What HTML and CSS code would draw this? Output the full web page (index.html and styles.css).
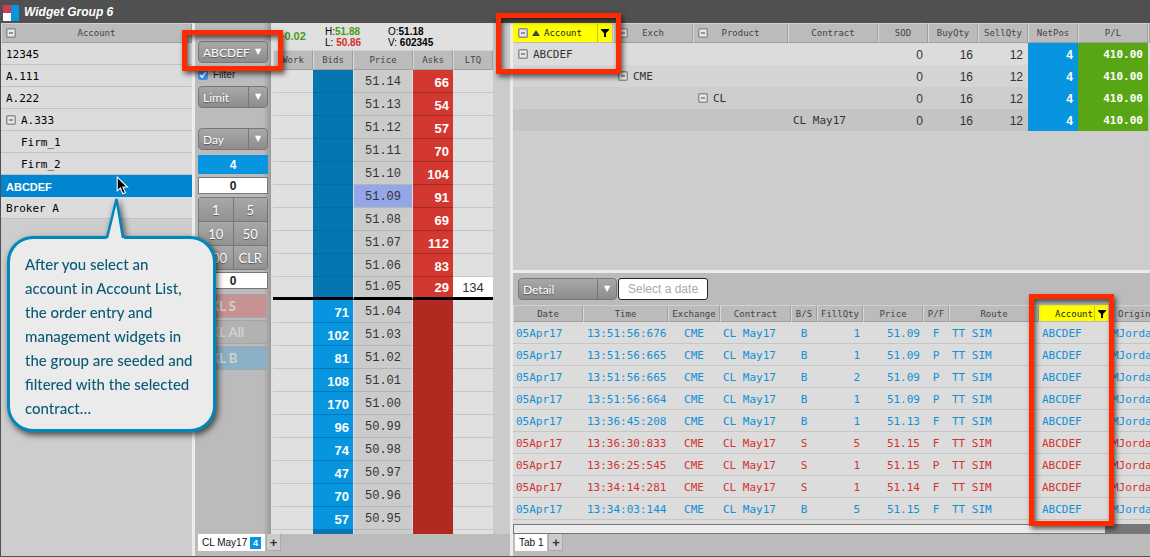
FILE: index.html
```html
<!DOCTYPE html>
<html lang="en">
<head>
<meta charset="utf-8">
<title>Widget Group 6</title>
<link rel="stylesheet" href="styles.css">
</head>
<body>
<svg class="defs" aria-hidden="true">
  <symbol id="minus" viewBox="0 0 10 10"><rect x=".75" y=".75" width="8.5" height="8.5" rx="1" fill="#e8e8e8" stroke="#8f8f8f" stroke-width="1.5"/><path d="M3 5h4" stroke="#777" stroke-width="1.5"/></symbol>
  <symbol id="filter" viewBox="0 0 8 8"><path d="M0 0h8v1L5 4v4H3V4L0 1z"/></symbol>
  <symbol id="sort" viewBox="0 0 8 6"><path d="M4 0l4 6H0z" fill="#444"/></symbol>
</svg>

<header class="titlebar">
  <svg class="logo" viewBox="0 0 16 16" aria-hidden="true"><path fill="#d03a55" d="M0 0h8v8H0z"/><path fill="#fff" d="M0 8h8v8H0z"/><path fill="#0695de" d="M8 0h8v16H8z"/></svg>
  <h1>Widget Group 6</h1>
</header>

<main class="workspace">
  <section class="accounts">
    <div class="head grid-head"><button class="toggle" aria-label="Collapse all"><svg><use href="#minus"/></svg></button><span>Account</span></div>
    <ul>
      <li>12345</li>
      <li>A.111</li>
      <li>A.222</li>
      <li><button class="toggle" aria-label="Collapse A.333"><svg><use href="#minus"/></svg></button>A.333</li>
      <li class="child">Firm_1</li>
      <li class="child">Firm_2</li>
      <li class="selected">ABCDEF</li>
      <li>Broker A</li>
    </ul>
  </section>

  <section class="trader">
    <div class="trader-body">
      <form class="entry">
        <div class="drop plain"><select aria-label="Account"><option>ABCDEF</option></select></div>
        <label class="check"><input type="checkbox" checked>Filter</label>
        <div class="drop type"><select aria-label="Order type"><option>Limit</option></select></div>
        <div class="drop"><select aria-label="Time in force"><option>Day</option></select></div>
        <button type="button" class="position">4</button>
        <input class="qty" type="text" value="0" aria-label="Quantity">
        <div class="keys">
          <button type="button">1</button><button type="button">5</button>
          <button type="button">10</button><button type="button">50</button>
          <button type="button">100</button><button type="button">CLR</button>
        </div>
        <input class="qty" type="text" value="0" aria-label="Disclosed quantity">
        <div class="cancels">
          <button type="button" class="sell">CXL S</button>
          <button type="button">CXL All</button>
          <button type="button" class="buy">CXL B</button>
        </div>
      </form>
      <div class="market">
        <div class="stats">
          <span class="up">+0.02</span>
          <div>H:<b class="up">51.88</b><br>L: <b class="down">50.86</b></div>
          <div>O:<b>51.18</b><br>V: <b>602345</b></div>
        </div>
        <table class="ladder">
          <colgroup><col class="w40"><col class="w40"><col class="w60"><col class="w40"><col class="w40"></colgroup>
          <thead><tr><th>Work</th><th>Bids</th><th>Price</th><th>Asks</th><th>LTQ</th></tr></thead>
          <tbody class="above">
            <tr><td></td><td></td><td>51.14</td><td>66</td><td></td></tr>
            <tr><td></td><td></td><td>51.13</td><td>54</td><td></td></tr>
            <tr><td></td><td></td><td>51.12</td><td>57</td><td></td></tr>
            <tr><td></td><td></td><td>51.11</td><td>70</td><td></td></tr>
            <tr><td></td><td></td><td>51.10</td><td>104</td><td></td></tr>
            <tr><td></td><td></td><td class="settle">51.09</td><td>91</td><td></td></tr>
            <tr><td></td><td></td><td>51.08</td><td>69</td><td></td></tr>
            <tr><td></td><td></td><td>51.07</td><td>112</td><td></td></tr>
            <tr><td></td><td></td><td>51.06</td><td>83</td><td></td></tr>
            <tr class="split"><td></td><td></td><td>51.05</td><td>29</td><td class="last">134</td></tr>
          </tbody>
          <tbody class="below">
            <tr><td></td><td>71</td><td>51.04</td><td></td><td></td></tr>
            <tr><td></td><td>102</td><td>51.03</td><td></td><td></td></tr>
            <tr><td></td><td>81</td><td>51.02</td><td></td><td></td></tr>
            <tr><td></td><td>108</td><td>51.01</td><td></td><td></td></tr>
            <tr><td></td><td>170</td><td>51.00</td><td></td><td></td></tr>
            <tr><td></td><td>96</td><td>50.99</td><td></td><td></td></tr>
            <tr><td></td><td>74</td><td>50.98</td><td></td><td></td></tr>
            <tr><td></td><td>47</td><td>50.97</td><td></td><td></td></tr>
            <tr><td></td><td>70</td><td>50.96</td><td></td><td></td></tr>
            <tr><td></td><td>57</td><td>50.95</td><td></td><td></td></tr>
            <tr><td></td><td class="empty"></td><td></td><td></td><td></td></tr>
          </tbody>
        </table>
      </div>
    </div>
    <footer class="tabs"><button class="tab">CL May17 <span class="count">4</span></button><button class="add" aria-label="Add tab">+</button></footer>
  </section>

  <section class="right">
    <div class="positions">
      <table class="sheet">
        <colgroup><col class="w100"><col class="w80"><col class="w95"><col class="w90"><col class="w50"><col class="w50"><col class="w50"><col class="w50"><col class="w70"><col></colgroup>
        <thead><tr>
          <th class="filtered"><div class="grid-head"><span class="lead"><button class="toggle" aria-label="Collapse accounts"><svg><use href="#minus"/></svg></button><svg class="sort"><use href="#sort"/></svg></span><span>Account</span><button class="funnel" aria-label="Filter account"><svg><use href="#filter"/></svg></button></div></th>
          <th><div class="grid-head"><button class="toggle" aria-label="Collapse exchanges"><svg><use href="#minus"/></svg></button><span>Exch</span></div></th>
          <th><div class="grid-head"><button class="toggle" aria-label="Collapse products"><svg><use href="#minus"/></svg></button><span>Product</span></div></th>
          <th>Contract</th><th>SOD</th><th>BuyQty</th><th>SellQty</th><th>NetPos</th><th>P/L</th><th></th>
        </tr></thead>
        <tbody>
          <tr class="l1"><td><button class="toggle" aria-label="Collapse ABCDEF"><svg><use href="#minus"/></svg></button>ABCDEF</td><td></td><td></td><td></td><td class="n">0</td><td class="n">16</td><td class="n">12</td><td class="n net">4</td><td class="n pl">410.00</td><td></td></tr>
          <tr class="l2"><td></td><td><button class="toggle" aria-label="Collapse CME"><svg><use href="#minus"/></svg></button>CME</td><td></td><td></td><td class="n">0</td><td class="n">16</td><td class="n">12</td><td class="n net">4</td><td class="n pl">410.00</td><td></td></tr>
          <tr class="l3"><td></td><td></td><td><button class="toggle" aria-label="Collapse CL"><svg><use href="#minus"/></svg></button>CL</td><td></td><td class="n">0</td><td class="n">16</td><td class="n">12</td><td class="n net">4</td><td class="n pl">410.00</td><td></td></tr>
          <tr class="l4"><td></td><td></td><td></td><td>CL May17</td><td class="n">0</td><td class="n">16</td><td class="n">12</td><td class="n net">4</td><td class="n pl">410.00</td><td></td></tr>
        </tbody>
      </table>
    </div>
    <div class="fills">
      <div class="toolbar">
        <div class="drop"><select aria-label="View"><option>Detail</option></select></div>
        <input type="text" placeholder="Select a date" aria-label="Date">
      </div>
      <div class="fills-view">
        <table class="sheet fill-sheet">
          <colgroup><col class="w70"><col class="w85"><col class="w52"><col class="w71"><col class="w26"><col class="w46"><col class="w60"><col class="w26"><col class="w90"><col class="w70"><col></colgroup>
          <thead><tr><th>Date</th><th>Time</th><th>Exchange</th><th>Contract</th><th>B/S</th><th>FillQty</th><th>Price</th><th>P/F</th><th>Route</th>
            <th class="filtered"><div class="grid-head"><span></span><span>Account</span><button class="funnel" aria-label="Filter account"><svg><use href="#filter"/></svg></button></div></th><th>Origin</th></tr></thead>
          <tbody>
            <tr><td>05Apr17</td><td>13:51:56:676</td><td>CME</td><td>CL May17</td><td>B</td><td>1</td><td>51.09</td><td>F</td><td>TT SIM</td><td>ABCDEF</td><td>MJorda</td></tr>
            <tr><td>05Apr17</td><td>13:51:56:665</td><td>CME</td><td>CL May17</td><td>B</td><td>1</td><td>51.09</td><td>P</td><td>TT SIM</td><td>ABCDEF</td><td>MJorda</td></tr>
            <tr><td>05Apr17</td><td>13:51:56:665</td><td>CME</td><td>CL May17</td><td>B</td><td>2</td><td>51.09</td><td>P</td><td>TT SIM</td><td>ABCDEF</td><td>MJorda</td></tr>
            <tr><td>05Apr17</td><td>13:51:56:664</td><td>CME</td><td>CL May17</td><td>B</td><td>1</td><td>51.09</td><td>P</td><td>TT SIM</td><td>ABCDEF</td><td>MJorda</td></tr>
            <tr><td>05Apr17</td><td>13:36:45:208</td><td>CME</td><td>CL May17</td><td>B</td><td>1</td><td>51.13</td><td>F</td><td>TT SIM</td><td>ABCDEF</td><td>MJorda</td></tr>
            <tr class="sold"><td>05Apr17</td><td>13:36:30:833</td><td>CME</td><td>CL May17</td><td>S</td><td>5</td><td>51.15</td><td>F</td><td>TT SIM</td><td>ABCDEF</td><td>MJorda</td></tr>
            <tr class="sold"><td>05Apr17</td><td>13:36:25:545</td><td>CME</td><td>CL May17</td><td>S</td><td>1</td><td>51.15</td><td>P</td><td>TT SIM</td><td>ABCDEF</td><td>MJorda</td></tr>
            <tr class="sold"><td>05Apr17</td><td>13:34:14:281</td><td>CME</td><td>CL May17</td><td>S</td><td>1</td><td>51.14</td><td>F</td><td>TT SIM</td><td>ABCDEF</td><td>MJorda</td></tr>
            <tr><td>05Apr17</td><td>13:34:03:144</td><td>CME</td><td>CL May17</td><td>B</td><td>5</td><td>51.15</td><td>F</td><td>TT SIM</td><td>ABCDEF</td><td>MJorda</td></tr>
          </tbody>
        </table>
      </div>
      <div class="scroll"><div class="thumb"></div></div>
    </div>
    <footer class="tabs"><button class="tab">Tab 1</button><button class="add" aria-label="Add tab">+</button></footer>
  </section>
</main>

<div class="mark mark-entry"></div>
<div class="mark mark-positions"></div>
<div class="mark mark-fills"></div>

<aside class="callout">
  <svg class="tail" viewBox="0 0 20 43" aria-hidden="true"><path d="M0 43L1.500 40 11 1 17.500 40 19 43z" fill="#ebebeb"/><path d="M1 41L10.500 2 17 41" fill="none" stroke="#0087bd" stroke-width="2.500"/></svg>
  <p>After you select an account in Account List, the order entry and management widgets in the group are seeded and filtered with the selected contract…</p>
</aside>
<svg class="cursor" viewBox="0 0 12 18" aria-hidden="true"><path d="M1 1v13l3-2.700 2.300 5.500 2.400-1L6.400 10.500h4.300z" fill="#000" stroke="#fff"/></svg>
</body>
</html>
```
FILE: styles.css
```css
* { box-sizing: border-box; }

body {
  margin: 0;
  height: 100vh;
  display: flex;
  flex-direction: column;
  overflow: hidden;
  background: #505050;
  color: #333;
  font-family: "Liberation Sans", Arial, sans-serif;
  font-size: 12px;
}

button, input, select { margin: 0; padding: 0; border: 0; border-radius: 0; font: inherit; color: inherit; }
button { background: none; }
.defs { display: none; }

.titlebar { flex: none; height: 23px; display: flex; align-items: center; gap: 5px; padding: 2px 3px 0; }
.logo { width: 16px; height: 16px; }
h1 { margin: 0; font-size: 12px; line-height: 16px; padding-bottom: 2px; font-style: italic; color: #fff; }

.workspace {
  flex: 1;
  min-height: 0;
  display: grid;
  grid-template-columns: 191px 315px minmax(0, 1fr);
  gap: 3px;
  margin: 0 0 1px 1px;
  background: #ececec;
}
.workspace > section { min-width: 0; min-height: 0; overflow: hidden; }

/* Column headings */
.head, th {
  height: 20px;
  padding: 0;
  background: #bbb;
  border: 1px solid;
  border-color: #d2d2d2 #9f9f9f #9f9f9f #d8d8d8;
  font: 9px "DejaVu Sans Mono", monospace;
  color: #444;
  text-align: center;
  white-space: nowrap;
  overflow: hidden;
}
.grid-head { display: grid; grid-template-columns: 1fr auto 1fr; align-items: center; }
.grid-head .toggle { justify-self: start; margin-left: 4px; }
.lead { display: flex; align-items: center; gap: 4px; }
.sort { width: 8px; height: 6px; }
.filtered { background: #ff0; color: #222; border-color: #ff0 #bbb #bbb #ff0; }
.funnel { justify-self: end; display: flex; align-items: center; justify-content: center; width: 15px; height: 18px; border-left: 1px solid #c8c800; color: #000; }
.funnel svg { width: 8px; height: 8px; }
.toggle { display: inline-block; width: 10px; height: 10px; line-height: 0; vertical-align: -1px; }
.toggle svg { width: 10px; height: 10px; }

/* Account list */
.accounts { background: #cdcdcd; }
.accounts ul { margin: 0; padding: 0; list-style: none; }
.accounts li {
  height: 22px;
  padding: 0 5px;
  border-bottom: 1px solid #c2c2c2;
  background: #dcdcdc;
  font: 11px/23px "DejaVu Sans Mono", monospace;
  color: #000;
}
.accounts li .toggle { margin-right: 5px; }
.accounts .child { padding-left: 20px; }
.accounts .selected { background: #0086d1; border-color: #0086d1; color: #fff; font: bold 11px/24px "Liberation Sans", sans-serif; }

/* Trader */
.trader, .right { display: flex; flex-direction: column; }
.trader { background: #cbcbcb; }
.trader-body { flex: 1; min-height: 0; display: flex; overflow: hidden; }
.entry {
  flex: none;
  width: 76px;
  padding: 18px 3px 0;
  background: linear-gradient(90deg, #bbb 90%, #999);
  display: flex;
  flex-direction: column;
}
.drop {
  position: relative;
  height: 22px;
  border: 1px solid #777;
  border-radius: 4px;
  background: linear-gradient(#a8a8a8, #8d8d8d);
  color: #fff;
  font: 12px Lato, sans-serif;
}
.drop select { appearance: none; width: 100%; height: 100%; padding: 0 20px 0 4px; background: none; text-shadow: 0 1px 1px #555; }
.drop::after {
  content: "▼";
  position: absolute;
  top: 0;
  right: 0;
  bottom: 0;
  width: 18px;
  border-left: 1px solid #777;
  font: 8px/20px "DejaVu Sans", sans-serif;
  text-align: center;
  pointer-events: none;
}
.plain::after { border-color: transparent; }
.plain select { padding-right: 0; }
.type { margin-bottom: 20px; }
.check { display: flex; align-items: center; gap: 5px; height: 23px; font-size: 10px; color: #222; }
.check input { width: 10px; height: 10px; accent-color: #3b8ff0; }
.position { height: 19px; margin: 5px 0 3px; background: #0695de; color: #fff; font-weight: bold; }
.qty { width: 100%; height: 17px; border: 1px solid #777; background: #fff; color: #222; font-weight: bold; text-align: center; }
.keys { display: grid; grid-template-columns: 1fr 1fr; gap: 1px; margin: 3px 0 2px; border: 1px solid #777; border-radius: 3px; background: #777; }
.keys button { height: 23px; background: linear-gradient(#a8a8a8, #929292); color: #fff; font: 13px Lato, sans-serif; text-shadow: 0 1px 1px #555; }
.cancels { display: grid; gap: 2px; margin-top: 5px; }
.cancels button { height: 24px; padding: 0 3px; border: 1px solid #a5a5a5; border-radius: 3px; background: #b2b2b2; color: #d2d2d2; font: bold 13px Lato, sans-serif; text-align: left; }
.cancels .sell { background: #c69292; }
.cancels .buy { background: #8ab0c6; }

.market { width: 222px; padding-left: 2px; background: #e0e0e0; }
.stats { display: flex; height: 27px; align-items: center; padding-left: 5px; font-size: 10px; line-height: 11px; color: #000; }
.stats > :first-child { width: 47px; font-size: 11px; font-weight: bold; }
.stats > :nth-child(2) { width: 63px; }
.up { color: #4c9a12; }
.down { color: #d22f2b; }

table { border-collapse: separate; border-spacing: 0; table-layout: fixed; width: 100%; }
td { white-space: nowrap; overflow: hidden; }
.w26 { width: 26px; }
.w40 { width: 40px; }
.w46 { width: 46px; }
.w50 { width: 50px; }
.w52 { width: 52px; }
.w60 { width: 60px; }
.w70 { width: 70px; }
.w71 { width: 71px; }
.w80 { width: 80px; }
.w85 { width: 85px; }
.w90 { width: 90px; }
.w95 { width: 95px; }
.w100 { width: 100px; }

.ladder td { height: 23px; padding: 3px 0 0; border-bottom: 1px solid #c6c6c6; background: #e0e0e0; text-align: center; font-size: 13px; line-height: 19px; }
.ladder td:nth-child(2) { padding-right: 4px; background: #0695de; border-color: #0576ae; color: #fff; font-weight: bold; text-align: right; }
.ladder td:nth-child(3) { background: #cbcbcb; border-color: #b5b5b5; border-left: 1px solid #ddd; border-right: 1px solid #ddd; font: 12px/19px "Liberation Mono", monospace; color: #333; }
.ladder td:nth-child(4) { padding-right: 4px; background: #b22922; border-color: #b22922; color: #fff; font-weight: bold; text-align: right; }
.ladder .above td:nth-child(2), .ladder td.empty:nth-child(2) { background: #0576b2; border-color: #066ba0; }
.ladder .above td:nth-child(4) { background: #d23730; border-color: #a52a25; }
.ladder .above .settle { background: #93a6e8; }
.ladder .above .split td { padding-top: 1px; border-bottom: 3px solid #000; }
.ladder .above .split .last { background: #fff; }

/* Position and fill tables */
.right { background: #cdcdcd; }
.positions { height: 250px; flex: none; border-bottom: 3px solid #ececec; overflow: hidden; }
.sheet td { height: 22px; padding: 2px 5px 0; font: 11px/18px "DejaVu Sans Mono", monospace; }
.sheet td .toggle { margin-right: 5px; }
.sheet .n { text-align: right; font: 12px/18px "Liberation Sans", sans-serif; }
.sheet .net { background: #0695de; color: #fff; font-weight: bold; }
.sheet .pl { background: #58a614; color: #fff; font: bold 11px/18px "DejaVu Sans Mono", monospace; }
.l1 { background: #dcdcdc; }
.l2 { background: #d4d4d4; }
.l3 { background: #cdcdcd; }
.l4 { background: #c4c4c4; }

.fills { flex: 1; min-height: 0; display: flex; flex-direction: column; }
.toolbar { display: flex; gap: 1px; padding: 5px; background: #bbb; }
.toolbar .drop { width: 99px; }
.toolbar input { width: 90px; height: 22px; padding: 0 9px; border: 1px solid #222; border-radius: 3px; background: #fff; font-size: 12px; }
.toolbar input::placeholder { color: #aaa; opacity: 1; }
.fills-view { flex: 1; min-height: 0; overflow: hidden; background: #dcdcdc; }
.fill-sheet th { height: 17px; }
.fill-sheet .funnel { height: 15px; width: 14px; }
.fill-sheet td { padding: 2px 3px 0; border-bottom: 1px solid #c6c6c6; color: #0c91d8; }
.fill-sheet td:nth-child(2) { padding-left: 4px; padding-right: 0; }
.fill-sheet td:nth-child(3), .fill-sheet td:nth-child(5), .fill-sheet td:nth-child(8) { text-align: center; }
.fill-sheet td:nth-child(6), .fill-sheet td:nth-child(7) { text-align: right; }
.fill-sheet td:last-child { padding-right: 0; }
.fill-sheet th:last-child { text-align: left; padding-left: 8px; border-right: 0; }
.fill-sheet .sold td { color: #d2332e; }
.scroll { flex: none; height: 10px; border: 1px solid #777; border-right: 0; background: #777; }
.thumb { width: 93%; height: 100%; background: #ececec; }

.tabs { flex: none; height: 22px; display: flex; align-items: flex-start; gap: 1px; padding: 0 3px; background: #bbb; }
.tab { height: 17px; padding: 0 4px; background: #fff; color: #111; font-size: 10px; }
.count { display: inline-block; width: 11px; height: 12px; background: #0695de; color: #fff; font: bold 9px/12px "Liberation Sans", sans-serif; }
.add { width: 15px; height: 17px; border: 1px solid #aaa; border-top: 0; background: #ccc; color: #333; font: bold 13px/15px "Liberation Sans", sans-serif; }
.right .tabs { padding-left: 2px; }

/* Annotations */
.mark { position: absolute; border: 5px solid #ff2a00; box-shadow: 2px 3px 5px rgba(0, 0, 0, .6), inset 2px 3px 5px rgba(0, 0, 0, .6); pointer-events: none; }
.mark-entry { left: 182px; top: 30px; width: 101px; height: 41px; }
.mark-positions { left: 496px; top: 13px; width: 125px; height: 61px; }
.mark-fills { left: 1029px; top: 294px; width: 85px; height: 232px; }

.callout {
  position: absolute;
  left: 7px;
  top: 236px;
  width: 209px;
  padding: 13px 16px 9px 15px;
  border: 3px solid #0087bd;
  border-radius: 26px;
  background: #ebebeb;
  filter: drop-shadow(2px 3px 3px rgba(0, 0, 0, .65));
}
.callout p { margin: 0; font: 500 14px/24px Lato, sans-serif; font-size: 15px; color: #0b5a78; }
.tail { position: absolute; left: 96px; top: -42px; width: 20px; height: 43px; }
.cursor { position: absolute; left: 116px; top: 176px; width: 13px; height: 19px; }
```
